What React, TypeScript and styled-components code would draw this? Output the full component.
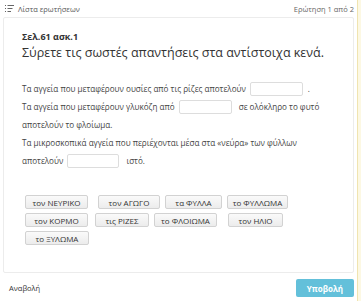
import React from "react";
import styled, { createGlobalStyle } from "styled-components";

const Global = createGlobalStyle`
  html, body { margin: 0; padding: 0; background: #fff; }
  body { font-family: "Open Sans", "Noto Sans", sans-serif; color: #333; }
  * { box-sizing: border-box; }
`;

const Page = styled.div`
  display: flex;
  width: 361px;
  height: 301px;
  overflow: hidden;
`;

const Main = styled.div`
  flex: 1;
  display: flex;
  flex-direction: column;
  padding: 0 3px;
`;

const Strip = styled.div`
  width: 4px;
  background: #fcf8e3;
  border-left: 1px solid #f0e4b0;
`;

const TopBar = styled.div`
  height: 17px;
  display: flex;
  align-items: center;
  justify-content: space-between;
  font-size: 7.5px;
  color: #555;
  padding: 0 0 0 2px;
`;

const ListLink = styled.div`
  display: flex;
  align-items: center;
  gap: 4px;
`;

const Counter = styled.div`
  color: #666;
`;

const Card = styled.div`
  height: 256px;
  border: 1px solid #ececec;
  border-radius: 2px;
  padding: 13px 18px 0 18px;
  display: flex;
  flex-direction: column;
`;

const Label = styled.div`
  font-size: 9px;
  font-weight: 700;
  color: #333;
  line-height: 12px;
`;

const Heading = styled.div`
  font-size: 12.5px;
  color: #333;
  line-height: 16px;
  margin-top: 2px;
`;

const Text = styled.div`
  margin-top: 19px;
  font-size: 8.1px;
  color: #444;
  line-height: 18px;
`;

const Blank = styled.span<{ $w: number }>`
  display: inline-block;
  vertical-align: middle;
  width: ${(p) => p.$w}px;
  height: 14px;
  border: 1px solid #ddd;
  border-radius: 2px;
  background: #fff;
  margin: 0 5px 0 4px;
  position: relative;
  top: -1px;
`;

const Choices = styled.div`
  margin-top: 25px;
  margin-left: 3px;
  display: flex;
  flex-direction: column;
  gap: 4px;
`;

const ChoiceRow = styled.div`
  display: flex;
`;

const Choice = styled.div<{ $w: number; $ml: number }>`
  width: ${(p) => p.$w}px;
  margin-left: ${(p) => p.$ml}px;
  height: 14px;
  display: flex;
  align-items: center;
  justify-content: center;
  font-size: 8px;
  color: #333;
  white-space: nowrap;
  background: linear-gradient(#fafafa, #ececec);
  border: 1px solid #d2d2d2;
  border-radius: 2px;
`;

const Footer = styled.div`
  flex: 1;
  display: flex;
  align-items: center;
  justify-content: space-between;
  padding: 2px 0 0 6px;
`;

const Later = styled.div`
  font-size: 7.5px;
  color: #333;
`;

const Submit = styled.div`
  width: 58px;
  height: 18px;
  background: #63c0da;
  border-radius: 2px;
  color: #fff;
  font-weight: 700;
  font-size: 8px;
  display: flex;
  align-items: center;
  justify-content: center;
`;

const ListIcon = () => (
  <svg width="9" height="7" viewBox="0 0 9 7" fill="none" stroke="#666" strokeWidth="1">
    <path d="M0 0.5h1M0 3.5h1M0 6.5h1M2.5 0.5h6.5M2.5 3.5h5M2.5 6.5h3.5" />
  </svg>
);

const rows: { t: string; w: number; ml: number }[][] = [
  [
    { t: "τον ΝΕΥΡΙΚΟ", w: 63, ml: 0 },
    { t: "τον ΑΓΩΓΟ", w: 62, ml: 10 },
    { t: "τα ΦΥΛΛΑ", w: 57, ml: 5 },
    { t: "το ΦΥΛΛΩΜΑ", w: 61, ml: 5 },
  ],
  [
    { t: "τον ΚΟΡΜΟ", w: 63, ml: 0 },
    { t: "τις ΡΙΖΕΣ", w: 54, ml: 7 },
    { t: "το ΦΛΟΙΩΜΑ", w: 63, ml: 5 },
    { t: "τον ΗΛΙΟ", w: 55, ml: 11 },
  ],
  [{ t: "το ΞΥΛΩΜΑ", w: 64, ml: 0 }],
];

export default function App() {
  return (
    <>
      <Global />
      <Page>
        <Main>
          <TopBar>
            <ListLink>
              <ListIcon />
              <span>Λίστα ερωτήσεων</span>
            </ListLink>
            <Counter>Ερώτηση 1 από 2</Counter>
          </TopBar>
          <Card>
            <Label>Σελ.61 ασκ.1</Label>
            <Heading>Σύρετε τις σωστές απαντήσεις στα αντίστοιχα κενά.</Heading>
            <Text>
              Τα αγγεία που μεταφέρουν ουσίες από τις ρίζες αποτελούν<Blank $w={53} />.
              <br />
              Τα αγγεία που μεταφέρουν γλυκόζη από<Blank $w={53} /> σε ολόκληρο το φυτό
              <br />
              αποτελούν το φλοίωμα.
              <br />
              Τα μικροσκοπικά αγγεία που περιέχονται μέσα στα «νεύρα» των φύλλων
              <br />
              αποτελούν<Blank $w={52} /> ιστό.
            </Text>
            <Choices>
              {rows.map((r, i) => (
                <ChoiceRow key={i}>
                  {r.map((c) => (
                    <Choice key={c.t} $w={c.w} $ml={c.ml}>
                      {c.t}
                    </Choice>
                  ))}
                </ChoiceRow>
              ))}
            </Choices>
          </Card>
          <Footer>
            <Later>Αναβολή</Later>
            <Submit>Υποβολή</Submit>
          </Footer>
        </Main>
        <Strip />
      </Page>
    </>
  );
}
